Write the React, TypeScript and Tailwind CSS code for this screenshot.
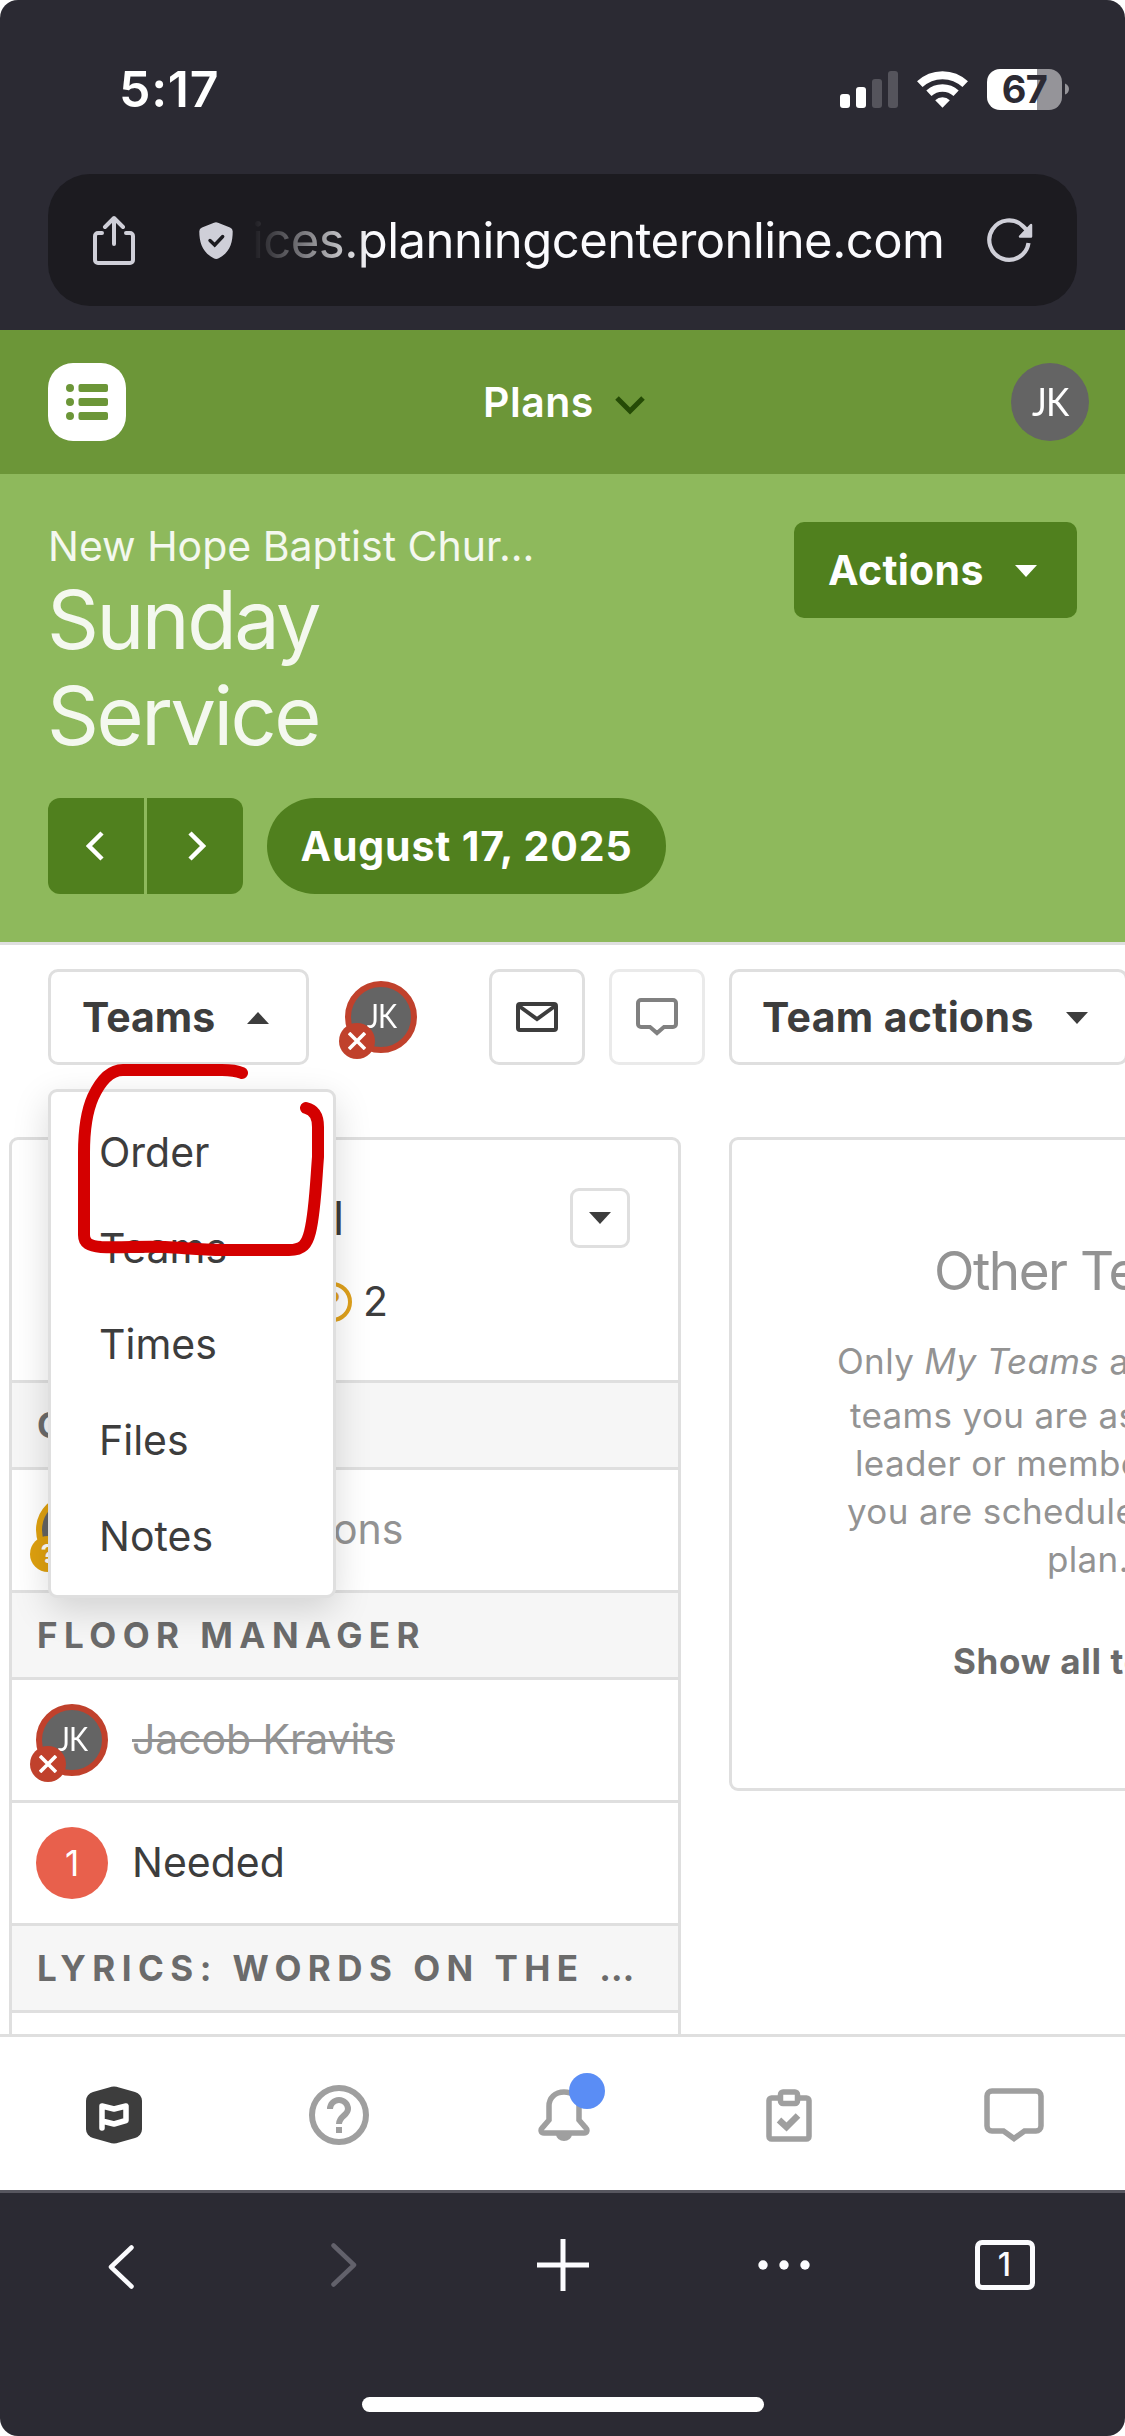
import type { ReactNode } from "react";

function Caret({ up = false, className = "" }: { up?: boolean; className?: string }) {
  return (
    <svg viewBox="0 0 22 12" className={`h-3 w-[22px] shrink-0 ${className}`} fill="currentColor">
      <path d={up ? "M0 12 11 0l11 12z" : "M0 0h22L11 12z"} />
    </svg>
  );
}

function Chevron({ right = false }: { right?: boolean }) {
  return (
    <svg viewBox="0 0 18 30" className="h-[30px] w-[18px]" fill="none" stroke="currentColor" strokeWidth="4.5">
      <path d={right ? "M2 2l13 13L2 28" : "M16 2 3 15l13 13"} />
    </svg>
  );
}

function Avatar({ status }: { status: "declined" | "pending" }) {
  const declined = status === "declined";
  return (
    <div className="relative size-[72px] shrink-0">
      <div
        className={`flex size-[72px] items-center justify-center rounded-full border-[6px] bg-[#646464] pb-[2px] font-[Lato,sans-serif] text-[32px] font-normal leading-none tracking-[-1px] text-white ${declined ? "border-[#c0412c]" : "border-[#dfa10f]"}`}
      >
        <span className="inline-block scale-x-90">{declined ? "JK" : ""}</span>
      </div>
      <div
        className={`absolute -bottom-[6px] -left-[6px] flex size-9 items-center justify-center rounded-full text-[26px] font-bold leading-none text-white ${declined ? "bg-[#c0412c]" : "bg-[#dfa10f]"}`}
      >
        {declined ? (
          <svg viewBox="0 0 18 18" className="size-[18px]" stroke="currentColor" strokeWidth="3.6">
            <path d="M1 1l16 16M17 1 1 17" />
          </svg>
        ) : (
          "?"
        )}
      </div>
    </div>
  );
}

function Section({ children }: { children: ReactNode }) {
  return (
    <div className="flex h-[87px] items-center overflow-hidden whitespace-nowrap border-b-[3px] border-[#dfdfdf] bg-[#f6f6f6] pl-[25px] text-[35px] font-bold tracking-[6.45px] text-[#6b6b6b]">
      {children}
    </div>
  );
}

function Row({ children }: { children: ReactNode }) {
  return (
    <div className="flex h-[123px] items-center gap-[24px] border-b-[3px] border-[#dfdfdf] pl-6 text-[41px]">
      {children}
    </div>
  );
}

function StatusBar() {
  return (
    <div className="flex h-[174px] items-center pl-[119px] pr-14 pt-1 text-white">
      <span className="text-[50px] font-semibold tracking-[0.7px]">5:17</span>
      <div className="ml-auto flex items-center">
        <div className="flex h-[37px] items-end gap-[6px]">
          <div className="h-[14px] w-[10px] rounded-[3px] bg-white" />
          <div className="h-[21px] w-[10px] rounded-[3px] bg-white" />
          <div className="h-[29px] w-[10px] rounded-[3px] bg-[#55545c]" />
          <div className="h-[37px] w-[10px] rounded-[3px] bg-[#55545c]" />
        </div>
        <svg viewBox="0 0 51 37" className="ml-[19px] h-[37px] w-[51px]" fill="none" stroke="white">
          <path d="M2.8 13.2a33 33 0 0 1 45.4 0" strokeWidth="8" />
          <path d="M11.9 22.3a20 20 0 0 1 27.2 0" strokeWidth="7.6" />
          <path d="M18.2 29.2a10.7 10.7 0 0 1 14.6 0L25.5 36.8z" fill="white" stroke="none" />
        </svg>
        <div className="ml-[19px] flex h-[41px] w-[75px] items-center justify-center rounded-[13px] bg-[linear-gradient(to_right,white_50px,#959499_50px)] text-[38px] font-bold leading-none tracking-[-0.7px] text-[#2c2a33]">
          67
        </div>
        <svg viewBox="0 0 5 14" className="ml-[3px] h-[14px] w-[4px]" fill="#959499">
          <path d="M0 0c3 1 5 4 5 7s-2 6-5 7z" />
        </svg>
      </div>
    </div>
  );
}

function AddressBar() {
  return (
    <div className="mx-12 flex h-[132px] items-center rounded-[42px] bg-[#1c1b20] pl-[45px] text-[#cfcfd8]">
      <svg viewBox="0 0 42 50" className="h-[50px] w-[42px]" fill="none" stroke="currentColor" strokeWidth="4" strokeLinecap="round" strokeLinejoin="round">
        <path d="M9 18H5a3 3 0 0 0-3 3v24a3 3 0 0 0 3 3h32a3 3 0 0 0 3-3V21a3 3 0 0 0-3-3h-4M21 29V4M12 12l9-9 9 9" />
      </svg>
      <svg viewBox="0 0 34 37" className="ml-[64px] h-[37px] w-[34px]">
        <path d="M15 .8a5 5 0 0 1 4 0l12 4.7a4 4 0 0 1 2.7 4c0 11-2.7 21-14 26.7a5 5 0 0 1-5 0C3.5 30.5.3 20.5.3 9.5a4 4 0 0 1 2.7-4z" fill="currentColor" />
        <path d="m11 18.5 4.7 4.5 8-8.5" fill="none" stroke="#1c1b20" strokeWidth="3.4" strokeLinecap="round" />
      </svg>
      <span className="ml-[19px] mt-[2px] w-[702px] whitespace-nowrap text-[49px] tracking-[-0.53px] text-[#fbfbfe] [mask-image:linear-gradient(to_right,transparent,black_120px)]">
        ices.planningcenteronline.com
      </span>
      <svg viewBox="0 0 46 46" className="ml-[33px] size-[46px]" fill="none" stroke="currentColor" strokeWidth="4.2">
        <path d="M41.5 26A19.7 19.7 0 1 1 36 9.2l4 4" />
        <path d="M44 8v11.500H33z" fill="currentColor" strokeWidth="2.5" strokeLinejoin="round" />
      </svg>
    </div>
  );
}

function AppHeader() {
  return (
    <div className="flex h-36 items-center bg-[#6c9638] pl-12 pr-9">
      <div className="flex size-[78px] items-center justify-center rounded-[25px] bg-white">
        <svg viewBox="0 0 42 36" className="h-9 w-[42px]" fill="#6c9638">
          <circle cx="4" cy="4" r="4" />
          <rect x="12.5" y="0" width="29.5" height="8" rx="2" />
          <circle cx="4" cy="18" r="4" />
          <rect x="12.5" y="14" width="29.5" height="8" rx="2" />
          <circle cx="4" cy="32" r="4" />
          <rect x="12.5" y="28" width="29.5" height="8" rx="2" />
        </svg>
      </div>
      <div className="ml-[357px] flex flex-1 items-center">
        <span className="mt-[2px] text-[41px] font-semibold tracking-[0.5px] text-white">Plans</span>
        <svg viewBox="0 0 30 19" className="ml-[21px] mt-[6px] h-[19px] w-[30px]" fill="none" stroke="#254b06" strokeWidth="5">
          <path d="M2 2l13 13L28 2" />
        </svg>
      </div>
      <div className="flex size-[78px] items-center justify-center rounded-full bg-[#646464] pb-[2px] font-[Lato,sans-serif] text-[39px] tracking-[-1px] text-white">
        <span className="inline-block scale-x-90">JK</span>
      </div>
    </div>
  );
}

function PlanHeader() {
  return (
    <div className="flex h-[468px] justify-between bg-[#8eb95c] px-12 pt-12">
      <div>
        <p className="h-12 text-[41px] leading-[48px] text-white/90">New Hope Baptist Chur...</p>
        <h1 className="relative top-[2px] -ml-[1px] text-[81px] leading-[96px] tracking-[-2.5px] text-white/90">
          Sunday
          <br />
          Service
        </h1>
        <div className="mt-9 flex h-24 text-white">
          <button className="flex w-[96px] items-center justify-center rounded-l-[12px] bg-[#50801e] pr-[2px]">
            <Chevron />
          </button>
          <button className="ml-[3px] flex w-[96px] items-center justify-center rounded-r-[12px] bg-[#50801e] pl-1">
            <Chevron right />
          </button>
          <button className="ml-6 flex w-[399px] items-center justify-center whitespace-nowrap rounded-full bg-[#50801e] pt-[2px] text-[41px] font-bold tracking-[0.85px]">
            August 17, 2025
          </button>
        </div>
      </div>
      <button className="flex h-24 w-[283px] items-center justify-between rounded-[10px] bg-[#50801e] pl-[34px] pr-[40px] pt-[2px] text-[41px] font-bold tracking-[0.3px] text-white">
        Actions
        <Caret />
      </button>
    </div>
  );
}

function Toolbar() {
  return (
    <div className="relative flex h-24 w-[1128px] items-center pl-12 text-[41px] font-bold">
      <button className="flex h-24 w-[261px] items-center justify-between rounded-[10px] border-[3px] border-[#dfdfdf] pl-[31px] pr-[37px] pt-[1px]">
        Teams
        <Caret up />
      </button>
      <div className="ml-9">
        <Avatar status="declined" />
      </div>
      <button className="ml-[72px] flex size-24 items-center justify-center rounded-[10px] border-[3px] border-[#dfdfdf]">
        <svg viewBox="0 0 42 30" className="h-[30px] w-[42px]" fill="none" stroke="currentColor" strokeWidth="4">
          <rect x="2" y="2" width="38" height="26" rx="2" />
          <path d="M3 4l18 13L39 4" />
        </svg>
      </button>
      <button className="ml-6 flex size-24 items-center justify-center rounded-[10px] border-[3px] border-[#dfdfdf] opacity-65">
        <svg viewBox="0 0 42 38" className="h-[38px] w-[42px]" fill="none" stroke="currentColor" strokeWidth="4">
          <path d="M5 2h32a3 3 0 0 1 3 3v21a3 3 0 0 1-3 3H28l-7 6-7-6H5a3 3 0 0 1-3-3V5a3 3 0 0 1 3-3z" />
        </svg>
      </button>
      <button className="ml-6 flex h-24 flex-1 items-center justify-between whitespace-nowrap rounded-[10px] border-[3px] border-[#dfdfdf] pl-[30px] pr-[37px] pt-[1px] tracking-[0.35px]">
        Team actions
        <Caret />
      </button>
      <div className="absolute left-12 top-[120px] z-10 h-[509px] w-72 rounded-[9px] border-[3px] border-[#dfdfdf] bg-white pl-[48px] pt-[14px] font-normal shadow-[0_12px_36px_rgba(0,0,0,0.15)]">
        {["Order", "Teams", "Times", "Files", "Notes"].map((item) => (
          <p key={item} className="h-24 leading-[92px]">
            {item}
          </p>
        ))}
      </div>
      <svg viewBox="0 0 250 200" className="absolute left-[75px] top-[92px] z-20 h-[200px] w-[250px]" fill="none" stroke="#d40000" strokeWidth="12" strokeLinecap="round" strokeLinejoin="round">
        <path d="M167 12q-7-3-20-3H48C34 9 24 23 18 36 10 54 9 75 9 92v82c0 8 5 11 17 12 20 1 40-1 64 0 20 1 37 3 58 3h66c14 0 18-6 21-18 5-20 6-50 8-75V66c0-10-3-17-12-19" />
      </svg>
    </div>
  );
}

function TeamCard() {
  return (
    <div className="h-[920px] w-[672px] shrink-0 rounded-t-[9px] border-[3px] border-[#dfdfdf]">
      <div className="h-[243px] border-b-[3px] border-[#dfdfdf] pt-12">
        <div className="flex h-[60px] items-center justify-between pl-[321px] pr-12">
          <span className="text-[46px] leading-none">l</span>
          <button className="flex size-[60px] items-center justify-center rounded-[9px] border-[3px] border-[#dfdfdf]">
            <Caret />
          </button>
        </div>
        <div className="mt-[34px] flex h-10 items-center gap-[11px] pl-[300px] text-[41px]">
          <div className="flex size-10 items-center justify-center rounded-full border-4 border-[#dfa11c] text-[30px] font-bold text-[#dfa11c]">
            ?
          </div>
          2
        </div>
      </div>
      <Section>C</Section>
      <Row>
        <Avatar status="pending" />
        <span className="pl-[201px] text-[#939393]">ons</span>
      </Row>
      <Section>FLOOR MANAGER</Section>
      <Row>
        <Avatar status="declined" />
        <span className="tracking-[-0.1px] text-[#939393] line-through decoration-[3px]">Jacob Kravits</span>
      </Row>
      <Row>
        <div className="flex size-[72px] items-center justify-center rounded-full bg-[#e8604c] text-[35px] text-white">1</div>
        <span>Needed</span>
      </Row>
      <Section>LYRICS: WORDS ON THE …</Section>
    </div>
  );
}

function OtherTeamsCard() {
  return (
    <div className="ml-12 h-[654px] w-[717px] shrink-0 whitespace-nowrap rounded-[9px] border-[3px] border-[#dfdfdf] pt-[95px] text-[35px] leading-[48px] tracking-[0.35px] text-[#939393]">
      <h2 className="pl-[202px] text-[53px] leading-[72px] tracking-[-1.5px]">Other Teams</h2>
      <p className="mt-[30px] pl-[105px]">
        Only <em>My Teams</em> are
      </p>
      <p className="mt-[6px] pl-[118px]">teams you are assigned</p>
      <p className="pl-[123px]">leader or member</p>
      <p className="pl-[115px]">you are scheduled</p>
      <p className="pl-[315px]">plan.</p>
      <p className="mt-[54px] pl-[221px] font-bold tracking-[0.7px] text-[#6b6b6b]">Show all teams</p>
    </div>
  );
}

function AppTabs() {
  return (
    <div className="grid h-[156px] grid-cols-[repeat(5,225px)] items-center justify-items-center border-t-[3px] border-[#dfdfdf] bg-white pl-[1.5px] pt-[3px] text-[#9f9f9f]">
      <svg viewBox="0 0 56 58" className="h-[58px] w-14">
        <path d="M23 1.5a14 14 0 0 1 10 0l16 4.6a9 9 0 0 1 7 8.700v28.400a9 9 0 0 1-7 8.700l-16 4.600a14 14 0 0 1-10 0L7 51.900a9 9 0 0 1-7-8.700V14.800a9 9 0 0 1 7-8.700z" fill="#3d3d3d" />
        <path d="M16 42V20l12 3 12-3v14.500l-12 3.500-12-3" fill="none" stroke="white" strokeWidth="5.5" strokeLinecap="round" strokeLinejoin="round" />
      </svg>
      <svg viewBox="0 0 60 60" className="size-[60px]" fill="none" stroke="currentColor" strokeWidth="6">
        <circle cx="30" cy="30" r="27" />
        <path d="M21 24a9 9 0 0 1 18 0c0 6.5-9 7-9 15M30 42v6" />
      </svg>
      <div className="relative flex size-[60px] items-center justify-center">
        <svg viewBox="0 0 52 52" className="size-[52px]">
          <path d="M26 3C17 3 11 9 11 17v14L4.500 38.500C2 41 3 44 6 44h40c3 0 4-3 1.500-5.500L41 31V17C41 9 35 3 26 3z" fill="none" stroke="currentColor" strokeWidth="5.5" />
          <path d="M18 45h16a8 7 0 0 1-16 0z" fill="currentColor" />
        </svg>
        <div className="absolute -top-3 left-[35px] size-9 rounded-full bg-[#5a8df5]" />
      </div>
      <svg viewBox="0 0 46 53" className="h-[53px] w-[46px]" fill="none" stroke="currentColor" strokeWidth="5.5">
        <rect x="3" y="9" width="40" height="41" rx="2.5" />
        <rect x="14.5" y="3" width="17" height="11.5" rx="2.5" fill="white" />
        <path d="m13 31 7.500 7L32 26.500" strokeWidth="6.5" />
      </svg>
      <svg viewBox="0 0 60 54" className="h-[54px] w-[60px]" fill="none" stroke="currentColor" strokeWidth="5.5">
        <path d="M8 3h44a5 5 0 0 1 5 5v30a5 5 0 0 1-5 5H40.500L30 50.500 19.500 43H8a5 5 0 0 1-5-5V8a5 5 0 0 1 5-5z" />
      </svg>
    </div>
  );
}

function BrowserToolbar() {
  return (
    <div className="flex h-[246px] flex-col items-center border-t-[3px] border-[#57565f] bg-[#2b2a33] text-[#fbfbfe]">
      <div className="grid h-[144px] w-[1105px] grid-cols-5 items-center justify-items-center">
        <svg viewBox="0 0 26 44" className="mt-1 h-11 w-[26px]" fill="none" stroke="currentColor" strokeWidth="4.5" strokeLinecap="round" strokeLinejoin="round">
          <path d="M23.5 2.5 3 22l20.500 19.500" />
        </svg>
        <svg viewBox="0 0 26 44" className="ml-1 h-11 w-[26px]" fill="none" stroke="#62616b" strokeWidth="4.5" strokeLinecap="round" strokeLinejoin="round">
          <path d="M2.5 2.5 23 22 2.500 41.500" />
        </svg>
        <svg viewBox="0 0 52 52" className="size-[52px]" stroke="currentColor" strokeWidth="5">
          <path d="M26 0v52M0 26h52" />
        </svg>
        <svg viewBox="0 0 52 10" className="h-[10px] w-[52px]" fill="currentColor">
          <circle cx="5" cy="5" r="4.7" />
          <circle cx="26" cy="5" r="4.7" />
          <circle cx="47" cy="5" r="4.7" />
        </svg>
        <div className="flex h-[50px] w-[60px] items-center justify-center rounded-[7px] border-[5px] border-[#fbfbfe] text-[32px] font-medium leading-none">
          1
        </div>
      </div>
      <div className="mt-[60px] h-[15px] w-[402px] rounded-full bg-white" />
    </div>
  );
}

export default function App() {
  return (
    <div className="h-[2436px] w-[1125px] overflow-hidden bg-white font-[Inter,sans-serif] text-[#3d3d3d]">
      <div className="flex h-full flex-col overflow-hidden rounded-[18px]">
        <div className="h-[330px] bg-[#2b2a33]">
          <StatusBar />
          <AddressBar />
        </div>
        <AppHeader />
        <PlanHeader />
        <div className="h-[1092px] overflow-hidden border-t-[3px] border-[#dfdfdf] bg-white pt-6">
          <Toolbar />
          <div className="mt-[72px] flex items-start pl-[9px]">
            <TeamCard />
            <OtherTeamsCard />
          </div>
        </div>
        <AppTabs />
        <BrowserToolbar />
      </div>
    </div>
  );
}
